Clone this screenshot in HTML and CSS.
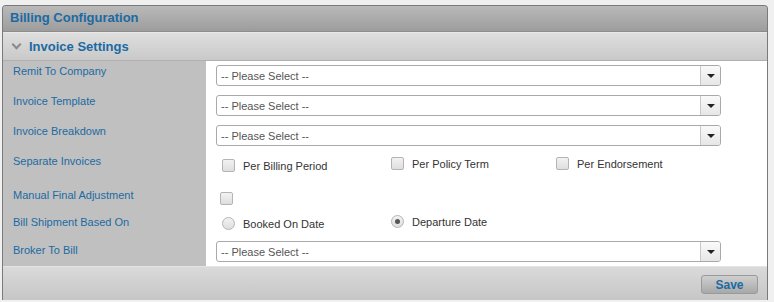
FILE: index.html
```html
<!DOCTYPE html>
<html lang="en">
<head>
  <meta charset="UTF-8">
  <title>Billing Configuration</title>
  <link rel="stylesheet" href="styles.css">
</head>
<body>
  <div class="panel">
    <div class="panel-title">Billing Configuration</div>
    <div class="section-bar">
      <span class="chevron"></span>
      <span class="section-title">Invoice Settings</span>
    </div>

    <div class="form">
      <div class="row row-select">
        <div class="label">Remit To Company</div>
        <div class="value">
          <div class="select"><span>-- Please Select --</span><span class="select-btn"></span></div>
        </div>
      </div>
      <div class="row row-select">
        <div class="label">Invoice Template</div>
        <div class="value">
          <div class="select"><span>-- Please Select --</span><span class="select-btn"></span></div>
        </div>
      </div>
      <div class="row row-select">
        <div class="label">Invoice Breakdown</div>
        <div class="value">
          <div class="select"><span>-- Please Select --</span><span class="select-btn"></span></div>
        </div>
      </div>
      <div class="row row-options">
        <div class="label">Separate Invoices</div>
        <div class="value options">
          <label class="option"><input type="checkbox"> Per Billing Period</label>
          <label class="option up"><input type="checkbox"> Per Policy Term</label>
          <label class="option up"><input type="checkbox"> Per Endorsement</label>
        </div>
      </div>
      <div class="row row-single">
        <div class="label">Manual Final Adjustment</div>
        <div class="value single">
          <input type="checkbox">
        </div>
      </div>
      <div class="row row-radios">
        <div class="label">Bill Shipment Based On</div>
        <div class="value options">
          <label class="option"><input type="radio" name="ship"> Booked On Date</label>
          <label class="option up"><input type="radio" name="ship" checked> Departure Date</label>
        </div>
      </div>
      <div class="row row-last">
        <div class="label">Broker To Bill</div>
        <div class="value">
          <div class="select"><span>-- Please Select --</span><span class="select-btn"></span></div>
        </div>
      </div>
    </div>

    <div class="footer">
      <button class="save">Save</button>
    </div>
  </div>
</body>
</html>
```

FILE: styles.css
```css
body {
  margin: 0;
  padding: 5px 6px 0 2px;
  background: #f0f0f0;
  font-family: "Liberation Sans", Arial, sans-serif;
  font-size: 11px;
}
.panel {
  border: 1px solid #7a7a7a;
  border-bottom: none;
  border-radius: 4px 4px 0 0;
  overflow: hidden;
  background: #c0c0c0;
}
.panel-title {
  height: 25px;
  line-height: 24px;
  padding-left: 7px;
  font-size: 13px;
  font-weight: bold;
  color: #1b6aa3;
  background: linear-gradient(#b9b9b9, #9d9d9d);
  border-bottom: 1px solid #8c8c8c;
}
.section-bar {
  height: 27px;
  display: flex;
  align-items: center;
  padding-left: 9px;
  background: linear-gradient(#dedede, #c9c9c9);
  border-top: 1px solid #e8e8e8;
  border-bottom: 1px solid #b0b0b0;
}
.chevron {
  width: 5px;
  height: 5px;
  border-right: 2px solid #8a8a8a;
  border-bottom: 2px solid #8a8a8a;
  transform: rotate(45deg);
  margin: -4px 9px 0 1px;
}
.section-title {
  font-size: 13px;
  font-weight: bold;
  color: #1b6aa3;
}
.form {
  display: flex;
  flex-direction: column;
}
.row {
  display: flex;
}
.label {
  width: 193px;
  flex-shrink: 0;
  padding: 4px 0 0 10px;
  line-height: 13px;
  color: #1b6aa3;
  background: #c0c0c0;
}
.value {
  flex: 1;
  background: #fff;
  padding-left: 10px;
}
.row-select { height: 30px; }
.row-options { height: 34px; }
.row-single { height: 27px; }
.row-radios { height: 28px; }
.row-last { height: 26px; }

.row-select .value {
  padding-top: 4px;
}
.row-last .value {
  padding-top: 1px;
}
.select {
  width: 499px;
  height: 19px;
  border: 1px solid #a9a9a9;
  border-radius: 3px;
  display: flex;
  align-items: center;
  justify-content: space-between;
  color: #555;
  padding-left: 4px;
  overflow: hidden;
}
.select-btn {
  width: 19px;
  height: 19px;
  border-left: 1px solid #c8c8c8;
  background: linear-gradient(#fafafa, #e6e6e6);
  position: relative;
}
.select-btn::after {
  content: "";
  position: absolute;
  left: 6px;
  top: 8px;
  border-left: 4px solid transparent;
  border-right: 4px solid transparent;
  border-top: 4px solid #222;
}
.options {
  display: grid;
  grid-template-columns: 169px 165px 1fr;
  align-items: start;
  padding-left: 16px;
}
.row-options .options { padding-top: 8px; }
.row-radios .options { padding-top: 5px; }
.option {
  display: flex;
  align-items: center;
  gap: 8px;
  color: #333;
}
.option.up {
  margin-top: -2px;
}
.single {
  padding: 7px 0 0 14px;
}
input[type="checkbox"],
input[type="radio"] {
  appearance: none;
  margin: 0;
  width: 13px;
  height: 13px;
  border: 1px solid #b4b4b4;
  background: linear-gradient(#f2f2f2, #dedede);
  flex-shrink: 0;
}
input[type="checkbox"] {
  border-radius: 2px;
}
input[type="radio"] {
  border-radius: 50%;
  position: relative;
}
input[type="radio"]:checked::after {
  content: "";
  position: absolute;
  left: 3px;
  top: 3px;
  width: 5px;
  height: 5px;
  border-radius: 50%;
  background: #555;
}
.footer {
  height: 34px;
  background: linear-gradient(#dadada, #c6c6c6);
  border-top: 1px solid #e4e4e4;
  display: flex;
  justify-content: flex-end;
  align-items: flex-start;
  padding: 8px 9px 0 0;
  box-sizing: border-box;
}
.save {
  width: 57px;
  height: 19px;
  border: 1px solid #9a9a9a;
  border-radius: 3px;
  background: linear-gradient(#cfcfcf, #a8a8a8);
  font-family: "Liberation Sans", Arial, sans-serif;
  font-size: 12px;
  font-weight: bold;
  color: #1b6aa3;
  padding: 0;
}
```
